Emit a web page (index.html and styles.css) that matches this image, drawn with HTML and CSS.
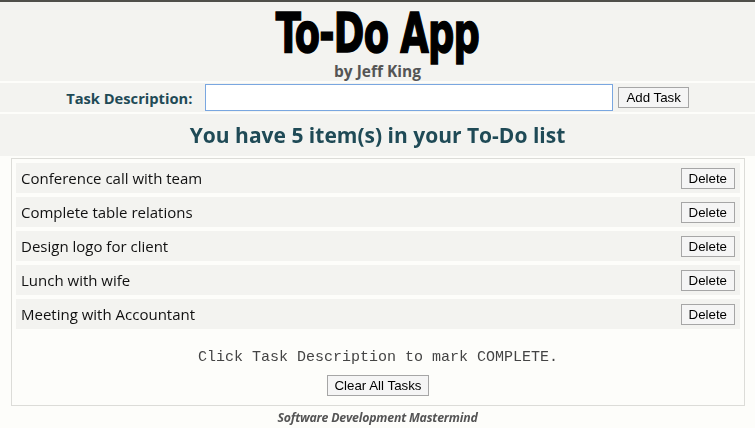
FILE: index.html
```html
<!DOCTYPE html>
<html>
<head>
<meta charset="utf-8">
<link rel="stylesheet" href="styles.css">
</head>
<body>
<header class="hero">
  <h1 class="title">To-Do App</h1>
  <div class="byline">by Jeff King</div>
</header>
<form class="addrow">
  <label class="addlabel" for="desc">Task Description:</label>
  <input class="addinput" id="desc" type="text" autofocus>
  <button class="btn" type="button">Add Task</button>
</form>
<div class="countrow">
  <h2 class="count">You have 5 item(s) in your To-Do list</h2>
</div>
<main class="panel">
  <ul class="list">
    <li class="item"><span class="itemtext">Conference call with team</span><button class="btn">Delete</button></li>
    <li class="item"><span class="itemtext">Complete table relations</span><button class="btn">Delete</button></li>
    <li class="item"><span class="itemtext">Design logo for client</span><button class="btn">Delete</button></li>
    <li class="item"><span class="itemtext">Lunch with wife</span><button class="btn">Delete</button></li>
    <li class="item"><span class="itemtext">Meeting with Accountant</span><button class="btn">Delete</button></li>
  </ul>
  <p class="hint">Click Task Description to mark COMPLETE.</p>
  <div class="clearwrap"><button class="btn">Clear All Tasks</button></div>
</main>
<footer class="footer">Software Development Mastermind</footer>
</body>
</html>
```

FILE: styles.css
```css
html, body {
  margin: 0;
  padding: 0;
}
body {
  background: #fdfdfa;
  border-top: 2px solid #4f4f4a;
  font-family: "Open Sans", "Noto Sans", sans-serif;
}
.hero {
  background: #f3f3f0;
  height: 79px;
  text-align: center;
}
.title {
  margin: 0;
  height: 60px;
  font-family: "Liberation Sans Narrow", "DejaVu Sans Condensed", sans-serif;
  font-weight: bold;
  font-size: 56px;
  line-height: 62px;
  color: #000;
  -webkit-text-stroke: 1.5px #000;
  transform: scaleX(0.73);
  letter-spacing: -1px;
}
.byline {
  margin-top: 0;
  font-weight: bold;
  font-size: 15.5px;
  line-height: 18px;
  color: #555;
}
.addrow {
  margin: 2px 0 0;
  background: #f3f3f0;
  height: 29px;
  display: flex;
  align-items: center;
  justify-content: center;
}
.addlabel {
  font-weight: bold;
  font-size: 14.7px;
  color: #1f4a56;
  margin-right: 13px;
  margin-left: 0;
}
.addinput {
  box-sizing: border-box;
  width: 408px;
  height: 27px;
  border: 1px solid #7aa7e0;
  background: #fff;
  outline: none;
  margin: 0 5px 0 0;
  padding: 0 4px;
  font-size: 14px;
}
.btn {
  font-family: "Liberation Sans", Arial, sans-serif;
  font-size: 13.3px;
  color: #000;
  background: #f5f5f5;
  border: 1px solid #a6a6a6;
  border-radius: 0;
  height: 21px;
  padding: 0 7px;
  line-height: 19px;
}
.countrow {
  margin-top: 2px;
  background: #f3f3f0;
  height: 42px;
  display: flex;
  align-items: center;
  justify-content: center;
}
.count {
  margin: 0;
  font-size: 21px;
  font-weight: bold;
  color: #1f4a56;
  line-height: 28px;
}
.panel {
  margin: 2px 10px 0 11px;
  border: 1px solid #dcdcd8;
  padding: 4px 4px 9px;
}
.list {
  list-style: none;
  margin: 0;
  padding: 0;
}
.item {
  background: #f3f3f0;
  height: 30px;
  margin-bottom: 4px;
  display: flex;
  align-items: center;
  justify-content: space-between;
  padding: 0 5px;
}
.item:last-child {
  margin-bottom: 0;
}
.itemtext {
  font-size: 15px;
  color: #111;
}
.hint {
  margin: 20px 0 0;
  text-align: center;
  font-family: "Liberation Mono", "Courier New", monospace;
  font-size: 15px;
  line-height: 18px;
  color: #444;
}
.clearwrap {
  margin-top: 6px;
  text-align: center;
}
.footer {
  text-align: center;
  font-style: italic;
  font-weight: bold;
  font-size: 12.3px;
  color: #555;
  margin-top: 3px;
  letter-spacing: -0.2px;
}
```
